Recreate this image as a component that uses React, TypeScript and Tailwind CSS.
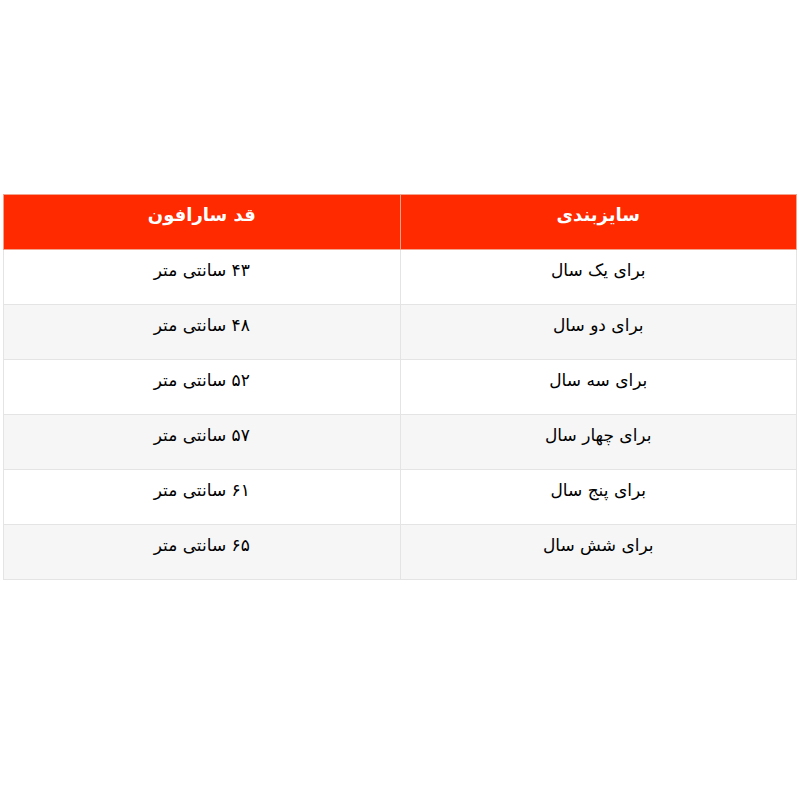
const rows = [
  ['برای یک سال', '۴۳ سانتی متر'],
  ['برای دو سال', '۴۸ سانتی متر'],
  ['برای سه سال', '۵۲ سانتی متر'],
  ['برای چهار سال', '۵۷ سانتی متر'],
  ['برای پنج سال', '۶۱ سانتی متر'],
  ['برای شش سال', '۶۵ سانتی متر'],
];

export default function App() {
  return (
    <div className="w-[800px] h-[800px] bg-white pt-[194px] px-[3px]" style={{ fontFamily: '"DejaVu Sans", sans-serif' }}>
      <table dir="rtl" className="w-full border-collapse text-[17px] text-black">
        <thead>
          <tr className="bg-[#ff2a00] text-white h-[55px]">
            <th className="w-1/2 border border-[#f2a48e] align-top pt-[6px] text-[18px] font-bold">سایزبندی</th>
            <th className="w-1/2 border border-[#f2a48e] align-top pt-[6px] text-[18px] font-bold">قد سارافون</th>
          </tr>
        </thead>
        <tbody>
          {rows.map((r, i) => (
            <tr key={i} className={`h-[55px] ${i % 2 === 1 ? 'bg-[#f6f6f6]' : 'bg-white'}`}>
              <td className="border border-[#e4e4e4] text-center align-top pt-[8px]">{r[0]}</td>
              <td className="border border-[#e4e4e4] text-center align-top pt-[8px]">{r[1]}</td>
            </tr>
          ))}
        </tbody>
      </table>
    </div>
  );
}
